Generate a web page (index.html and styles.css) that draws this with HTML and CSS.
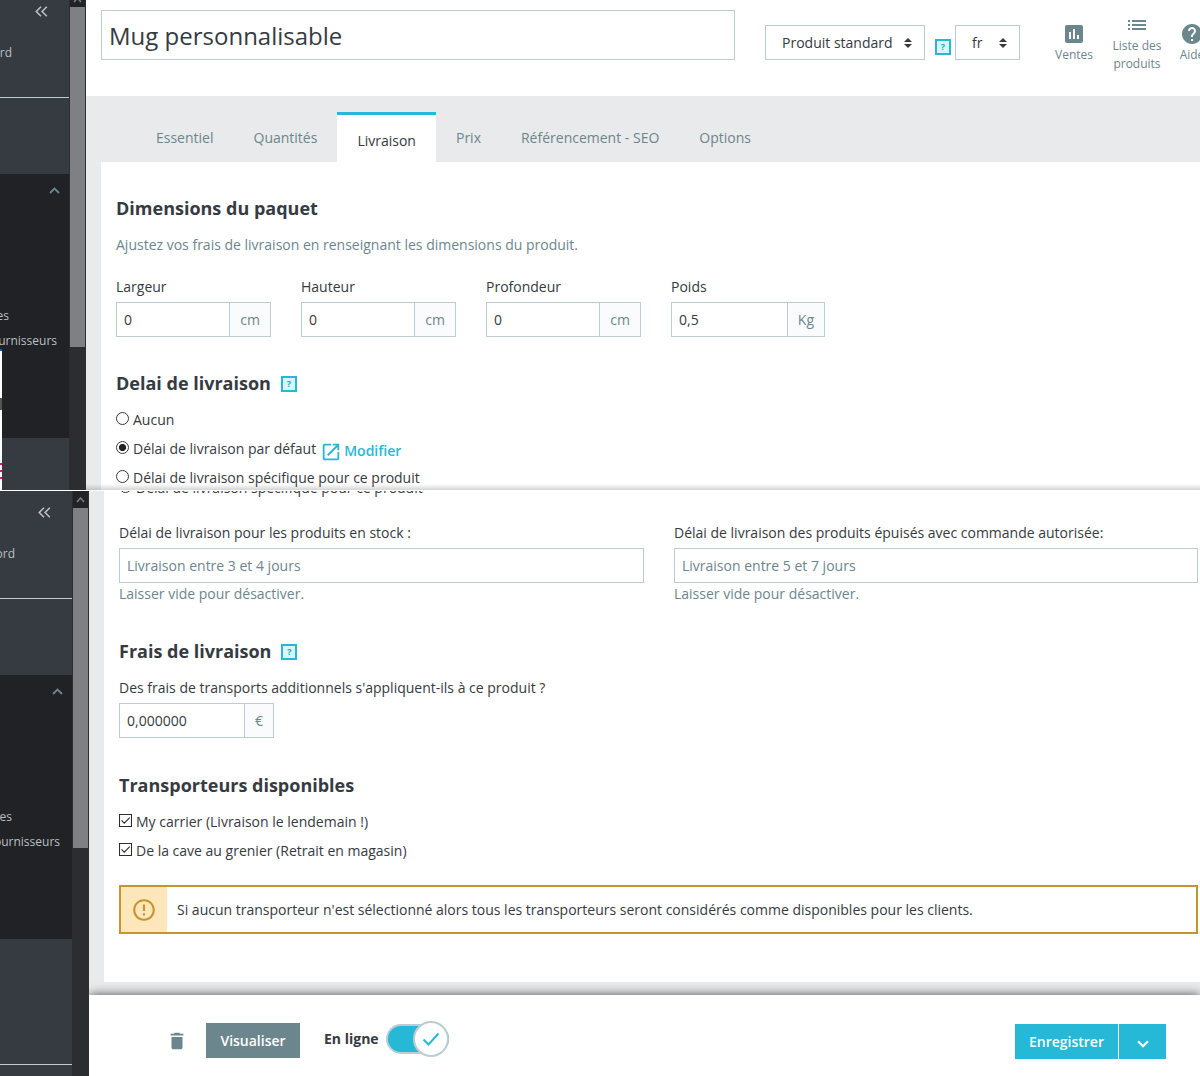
FILE: index.html
```
<!DOCTYPE html>
<html lang="fr">
<head>
    <meta charset="UTF-8">
    <title>Mug personnalisable</title>
    <link rel="stylesheet" href="styles.css">
</head>
<body>

<div class="shot shot-top">
    <div class="sidebar">
        <div class="nav-collapse">
            <svg width="13" height="11" viewBox="0 0 13 11"><path d="M6 .8 1.3 5.5 6 10.2M11.8 .8 7.1 5.5l4.7 4.7"/></svg>
        </div>
        <div class="nav-dash">rd</div>
        <div class="nav-gap"></div>
        <div class="nav-open">
            <svg class="nav-arrow" width="11" height="7" viewBox="0 0 11 7"><path d="M1 6l4.500-4.500L10 6"/></svg>
            <div class="nav-sub nav-es">es</div>
            <div class="nav-sub">urnisseurs</div>
        </div>
        <div class="edge-strip">
            <span class="edge-dot"></span>
            <span class="edge-pink"></span>
        </div>
    </div>
    <div class="scrollbar">
        <div class="scroll-up"><svg width="9" height="6" viewBox="0 0 9 6"><path d="M1 5l3.500-4L8 5"/></svg></div>
        <div class="scroll-thumb"></div>
    </div>
    <div class="main">
        <div class="header">
            <div class="title-input">Mug personnalisable</div>
            <div class="select select-type">Produit standard
                <svg width="8" height="10" viewBox="0 0 8 10"><path d="M0 4l4-4 4 4zM0 6h8l-4 4z"/></svg>
            </div>
            <span class="help help-head">?</span>
            <div class="select select-lang">fr
                <svg width="8" height="10" viewBox="0 0 8 10"><path d="M0 4l4-4 4 4zM0 6h8l-4 4z"/></svg>
            </div>
            <div class="tool tool-sales">
                <svg width="24" height="24" viewBox="0 0 24 24"><path d="M19 3H5c-1.100 0-2 .9-2 2v14c0 1.100.9 2 2 2h14c1.100 0 2-.9 2-2V5c0-1.100-.9-2-2-2zM9 17H7v-7h2v7zm4 0h-2V7h2v10zm4 0h-2v-4h2v4z"/></svg>
                <span>Ventes</span>
            </div>
            <div class="tool tool-list">
                <svg width="24" height="24" viewBox="0 0 24 24"><path d="M3 13h2v-2H3v2zm0 4h2v-2H3v2zm0-8h2V7H3v2zm4 4h14v-2H7v2zm0 4h14v-2H7v2zM7 7v2h14V7H7z"/></svg>
                <span>Liste des<br>produits</span>
            </div>
            <div class="tool tool-help">
                <svg width="24" height="24" viewBox="0 0 24 24"><path d="M12 2C6.480 2 2 6.480 2 12s4.480 10 10 10 10-4.480 10-10S17.520 2 12 2zm1 17h-2v-2h2v2zm2.070-7.750l-.9.920C13.450 12.900 13 13.500 13 15h-2v-.5c0-1.100.45-2.100 1.170-2.830l1.240-1.260c.37-.36.59-.86.59-1.410 0-1.100-.9-2-2-2s-2 .9-2 2H8c0-2.210 1.790-4 4-4s4 1.790 4 4c0 .88-.36 1.680-.93 2.250z"/></svg>
                <span>Aide</span>
            </div>
        </div>
        <div class="tabs">
            <a class="tab">Essentiel</a>
            <a class="tab">Quantités</a>
            <a class="tab active">Livraison</a>
            <a class="tab">Prix</a>
            <a class="tab">Référencement - SEO</a>
            <a class="tab">Options</a>
        </div>
        <div class="panel">
            <h2 class="first">Dimensions du paquet</h2>
            <p class="intro">Ajustez vos frais de livraison en renseignant les dimensions du produit.</p>
            <div class="dims">
                <div class="field">
                    <label>Largeur</label>
                    <div class="group"><span class="value">0</span><span class="unit">cm</span></div>
                </div>
                <div class="field">
                    <label>Hauteur</label>
                    <div class="group"><span class="value">0</span><span class="unit">cm</span></div>
                </div>
                <div class="field">
                    <label>Profondeur</label>
                    <div class="group"><span class="value">0</span><span class="unit">cm</span></div>
                </div>
                <div class="field">
                    <label>Poids</label>
                    <div class="group"><span class="value">0,5</span><span class="unit">Kg</span></div>
                </div>
            </div>
            <h2 class="delay">Delai de livraison <span class="help">?</span></h2>
            <div class="choice"><i class="radio"></i>Aucun</div>
            <div class="choice"><i class="radio checked"></i>Délai de livraison par défaut
                <a class="edit">
                    <svg width="22" height="22" viewBox="0 0 24 24"><path d="M19 19H5V5h7V3H5c-1.110 0-2 .9-2 2v14c0 1.100.89 2 2 2h14c1.100 0 2-.9 2-2v-7h-2v7zM14 3v2h3.590l-9.830 9.830 1.410 1.410L19 6.410V10h2V3h-7z"/></svg>Modifier
                </a>
            </div>
            <div class="choice"><i class="radio"></i>Délai de livraison spécifique pour ce produit</div>
        </div>
        <div class="fade"></div>
    </div>
</div>

<div class="shot shot-bottom">
    <div class="sidebar">
        <div class="nav-collapse">
            <svg width="13" height="11" viewBox="0 0 13 11"><path d="M6 .8 1.300 5.500 6 10.200M11.800 .8 7.100 5.500l4.700 4.700"/></svg>
        </div>
        <div class="nav-dash">ord</div>
        <div class="nav-gap"></div>
        <div class="nav-open">
            <svg class="nav-arrow" width="11" height="7" viewBox="0 0 11 7"><path d="M1 6l4.500-4.500L10 6"/></svg>
            <div class="nav-sub nav-es">es</div>
            <div class="nav-sub">ournisseurs</div>
        </div>
        <div class="nav-end"></div>
    </div>
    <div class="scrollbar">
        <div class="scroll-up"><svg width="9" height="6" viewBox="0 0 9 6"><path d="M1 5l3.500-4L8 5"/></svg></div>
        <div class="scroll-thumb"></div>
    </div>
    <div class="main">
        <div class="panel">
            <div class="choice cut"><i class="radio"></i>Délai de livraison spécifique pour ce produit</div>
            <div class="delays">
                <div class="field">
                    <label>Délai de livraison pour les produits en stock :</label>
                    <div class="input">Livraison entre 3 et 4 jours</div>
                    <small>Laisser vide pour désactiver.</small>
                </div>
                <div class="field">
                    <label>Délai de livraison des produits épuisés avec commande autorisée:</label>
                    <div class="input">Livraison entre 5 et 7 jours</div>
                    <small>Laisser vide pour désactiver.</small>
                </div>
            </div>
            <h2 class="fees">Frais de livraison <span class="help">?</span></h2>
            <div class="field fee-field">
                <label>Des frais de transports additionnels s'appliquent-ils à ce produit ?</label>
                <div class="group"><span class="value">0,000000</span><span class="unit">€</span></div>
            </div>
            <h2 class="carriers">Transporteurs disponibles</h2>
            <div class="choice">
                <svg class="check" width="13" height="13" viewBox="0 0 13 13"><path d="M.5.5h12v12H.5zM2.500 6.300l2.800 2.900 5.400-5.500"/></svg>My carrier (Livraison le lendemain !)
            </div>
            <div class="choice">
                <svg class="check" width="13" height="13" viewBox="0 0 13 13"><path d="M.5.5h12v12H.5zM2.500 6.300l2.800 2.900 5.400-5.500"/></svg>De la cave au grenier (Retrait en magasin)
            </div>
            <div class="alert">
                <div class="alert-icon">
                    <svg width="26" height="26" viewBox="0 0 24 24"><path d="M11 15h2v2h-2zm0-8h2v6h-2zm.990-5C6.470 2 2 6.480 2 12s4.470 10 9.990 10C17.520 22 22 17.520 22 12S17.520 2 11.990 2zM12 20c-4.420 0-8-3.580-8-8s3.580-8 8-8 8 3.580 8 8-3.580 8-8 8z"/></svg>
                </div>
                <p>Si aucun transporteur n'est sélectionné alors tous les transporteurs seront considérés comme disponibles pour les clients.</p>
            </div>
        </div>
        <div class="footer">
            <svg class="trash" width="22" height="22" viewBox="0 0 24 24"><path d="M6 19c0 1.100.9 2 2 2h8c1.100 0 2-.9 2-2V7.500H6V19z"/><path d="M19 4h-3.500l-1-1h-5l-1 1H5v2h14V4z"/></svg>
            <a class="btn btn-view">Visualiser</a>
            <span class="online">En ligne</span>
            <span class="switch">
                <span class="knob"><svg width="18" height="14" viewBox="0 0 18 14"><path d="M1.500 7.500l5 5L16.500 1.500"/></svg></span>
            </span>
            <div class="save">
                <a class="btn btn-save">Enregistrer</a>
                <a class="btn btn-more"><svg width="12" height="8" viewBox="0 0 12 8"><path d="M1 1.200l5 5 5-5"/></svg></a>
            </div>
        </div>
    </div>
</div>

</body>
</html>
```
FILE: styles.css
```
* {
    box-sizing: border-box;
    margin: 0;
    padding: 0;
}

body {
    width: 1200px;
    height: 1076px;
    overflow: hidden;
    background: #fff;
    color: #363a41;
    font-family: "Open Sans", "Liberation Sans", sans-serif;
    font-size: 14px;
    line-height: 20px;
}

.shot {
    display: flex;
    width: 1200px;
    overflow: hidden;
}

.shot-top {
    height: 490px;
}

.shot-bottom {
    height: 585px;
    margin-top: 1px;
}

/* menu */
.sidebar {
    position: relative;
    flex: none;
    width: 69px;
    overflow: hidden;
    background: #363a41;
    color: #bebfc2;
    font-size: 12px;
    line-height: 18px;
}

.shot-bottom .sidebar {
    width: 72px;
}

.sidebar svg,
.scroll-up svg {
    display: block;
    fill: none;
}

.nav-collapse {
    display: flex;
    justify-content: flex-end;
    height: 44px;
    padding: 6px 21px 0 0;
}

.nav-collapse svg {
    stroke: #bebfc2;
    stroke-width: 1.6;
}

.nav-dash {
    display: flex;
    justify-content: flex-end;
    height: 54px;
    padding-right: 57px;
    border-bottom: 1px solid #bbcdd2;
}

.shot-bottom .nav-collapse {
    padding-top: 16px;
    height: 54px;
}

.nav-gap {
    height: 76px;
}

.nav-open {
    height: 264px;
    padding-top: 13px;
    background: #202226;
}

.nav-arrow {
    margin: 0 9px 0 auto;
    stroke: #6c868e;
    stroke-width: 1.8;
}

.nav-sub {
    display: flex;
    justify-content: flex-end;
    height: 25px;
    padding-right: 12px;
}

.nav-es {
    margin-top: 113px;
    padding-right: 60px;
}

.nav-end {
    height: 126px;
    border-bottom: 1px solid #bbcdd2;
}

.edge-strip {
    position: absolute;
    left: 0;
    top: 349px;
    width: 2px;
    height: 141px;
    border-top: 2px solid #0a64ad;
    background: #fff;
}

.edge-dot {
    display: block;
    width: 2px;
    height: 12px;
    margin-top: 47px;
    background: #555;
}

.edge-pink {
    display: block;
    width: 2px;
    height: 16px;
    margin-top: 53px;
    background: repeating-linear-gradient(#e0146e 0, #e0146e 2px, #fff 2px, #fff 7px);
}

.scrollbar {
    flex: none;
    width: 17px;
    padding: 0 1px;
    background: #2c2d31;
}

.scroll-up {
    height: 7px;
    padding-left: 3px;
    overflow: hidden;
    background: #222327;
}

.scroll-up svg {
    margin-top: -3px;
    stroke: #808184;
    stroke-width: 1.5;
}

.scroll-thumb {
    height: 340px;
    background: #7f8083;
}

.shot-bottom .scroll-up {
    height: 17px;
}

.shot-bottom .scroll-up svg {
    margin-top: 6px;
}

/* page */
.main {
    position: relative;
    flex: 1;
    min-width: 0;
    overflow: hidden;
    background: #e9eaeb;
}

.header {
    display: flex;
    align-items: flex-start;
    height: 96px;
    padding: 10px 0 0 15px;
    background: #fff;
}

.title-input {
    flex: none;
    width: 634px;
    height: 50px;
    padding-left: 7px;
    border: 1px solid #bbcdd2;
    font-size: 24px;
    line-height: 50px;
}

.select {
    display: flex;
    flex: none;
    align-items: center;
    justify-content: space-between;
    height: 35px;
    margin-top: 15px;
    padding: 0 12px 0 16px;
    border: 1px solid #bbcdd2;
}

.select svg {
    fill: #363a41;
}

.select-type {
    width: 160px;
    margin-left: 30px;
}

.select-lang {
    width: 65px;
    margin-left: 4px;
}

.help {
    display: inline-block;
    flex: none;
    width: 16px;
    height: 16px;
    border: 2px solid #25b9d7;
    background: #d9f6fb;
    color: #25a5c0;
    font-size: 9px;
    font-weight: 700;
    line-height: 12px;
    text-align: center;
}

.help-head {
    margin: 29px 0 0 10px;
}

.tool {
    display: flex;
    flex: none;
    flex-direction: column;
    align-items: center;
    color: #6c868e;
    font-size: 12px;
    line-height: 18px;
    text-align: center;
    white-space: nowrap;
}

.tool svg {
    display: block;
    fill: #6c868e;
}

.tool-sales {
    width: 60px;
    margin: 12px 0 0 24px;
}

.tool-list {
    width: 60px;
    margin: 3px 0 0 3px;
}

.tool-help {
    width: 50px;
    margin: 12px -20px 0 0;
}

.tabs {
    display: flex;
    height: 66px;
    padding: 16px 0 0 50px;
}

.tab {
    height: 50px;
    padding: 16px 20px 0;
    color: #6c868e;
    white-space: nowrap;
}

.tab.active {
    border-top: 3px solid #25b9d7;
    background: #fff;
    color: #363a41;
}

.panel {
    height: 328px;
    margin-left: 15px;
    padding-left: 15px;
    background: #fff;
}

h2 {
    display: flex;
    align-items: center;
    height: 24px;
    font-size: 18px;
    font-weight: 700;
    line-height: 24px;
}

h2 .help {
    margin: 2px 0 0 10px;
}

h2.first {
    margin-bottom: 15px;
}

.shot-top .panel {
    padding-top: 34px;
}

.intro {
    height: 42px;
    color: #6c868e;
}

.dims {
    display: grid;
    grid-template-columns: 155px 155px 155px 154px;
    column-gap: 30px;
}

.field label {
    display: block;
    height: 25px;
    white-space: nowrap;
}

.group {
    display: flex;
    height: 35px;
    border: 1px solid #bbcdd2;
    line-height: 34px;
}

.fee-field .group {
    width: 155px;
}

.value {
    flex: 1;
    padding-left: 7px;
}

.unit {
    padding: 0 10px;
    border-left: 1px solid #bbcdd2;
    background: #fafbfc;
    color: #6c868e;
}

.delay {
    margin: 34px 0 15px;
}

.choice {
    display: flex;
    align-items: center;
    height: 20px;
    margin-bottom: 9px;
    white-space: nowrap;
}

.radio {
    flex: none;
    width: 13px;
    height: 13px;
    margin: -3px 4px 0 0;
    border: 1px solid #363a41;
    border-radius: 50%;
    background: #fff;
}

.radio.checked {
    background: radial-gradient(circle, #222 3.200px, #fff 3.900px);
}

.edit {
    display: flex;
    align-items: center;
    margin: 4px 0 0 4px;
    color: #25b9d7;
    font-weight: 600;
}

.edit svg {
    margin: 1px 2px 0 0;
    fill: #25b9d7;
}

/* shade at the lower edge of the first view */
.fade {
    position: absolute;
    left: 0;
    right: 0;
    bottom: 0;
    height: 6px;
    background: linear-gradient(rgba(0, 0, 0, 0), rgba(0, 0, 0, .17));
}

.shot-bottom .panel {
    height: 491px;
    overflow: hidden;
}

.choice.cut {
    margin: -13px 0 0;
    height: 20px;
}

.delays {
    display: grid;
    grid-template-columns: 525px 524px;
    column-gap: 30px;
    padding-top: 25px;
}

.input {
    height: 35px;
    padding-left: 7px;
    border: 1px solid #bbcdd2;
    color: #6c868e;
    line-height: 34px;
}

.field small {
    display: block;
    margin-top: 1px;
    color: #6c868e;
    font-size: 14px;
    line-height: 20px;
}

.fees {
    margin: 35px 0 15px;
}

.carriers {
    margin: 35px 0 15px;
}

.check {
    flex: none;
    margin: -3px 4px 0 0;
    fill: none;
    stroke: #2b2d32;
    stroke-width: 1.100;
}

.alert {
    display: flex;
    width: 1079px;
    height: 49px;
    margin-top: 24px;
    border: 2px solid #c5962f;
}

.alert-icon {
    display: flex;
    align-items: center;
    justify-content: center;
    width: 46px;
    background: #fde6b9;
}

.alert-icon svg {
    fill: #c5962f;
}

.alert p {
    padding-left: 10px;
    line-height: 45px;
    white-space: nowrap;
}

.footer {
    position: relative;
    display: flex;
    align-items: flex-start;
    height: 81px;
    margin-top: 13px;
    background: #fff;
    box-shadow: 0 0 10px 0 rgba(54, 58, 65, .9);
}

.trash {
    margin: 35px 18px 0 77px;
    fill: #6c868e;
}

.btn {
    display: flex;
    align-items: center;
    justify-content: center;
    height: 35px;
    color: #fff;
    font-weight: 600;
}

.btn-view {
    width: 94px;
    margin-top: 28px;
    background: #6c868e;
}

.online {
    margin: 34px 0 0 24px;
    width: 62px;
    font-weight: 700;
    white-space: nowrap;
}

.switch {
    display: flex;
    justify-content: flex-end;
    width: 63px;
    height: 30px;
    margin-top: 29px;
    border: 2px solid #bbcdd2;
    border-right: 0;
    border-radius: 15px;
    background: #25b9d7;
}

.knob {
    display: flex;
    flex: none;
    align-items: center;
    justify-content: center;
    width: 36px;
    height: 36px;
    margin-top: -5px;
    border: 2px solid #bbcdd2;
    border-radius: 50%;
    background: #fff;
}

.knob svg {
    fill: none;
    stroke: #25b9d7;
    stroke-width: 2;
}

.save {
    display: flex;
    gap: 1px;
    margin: 29px 34px 0 auto;
}

.btn-save {
    width: 103px;
    background: #25b9d7;
}

.btn-more {
    width: 47px;
    background: #25b9d7;
}

.btn-more svg {
    margin-top: 4px;
    fill: none;
    stroke: #fff;
    stroke-width: 2.200;
}
```
